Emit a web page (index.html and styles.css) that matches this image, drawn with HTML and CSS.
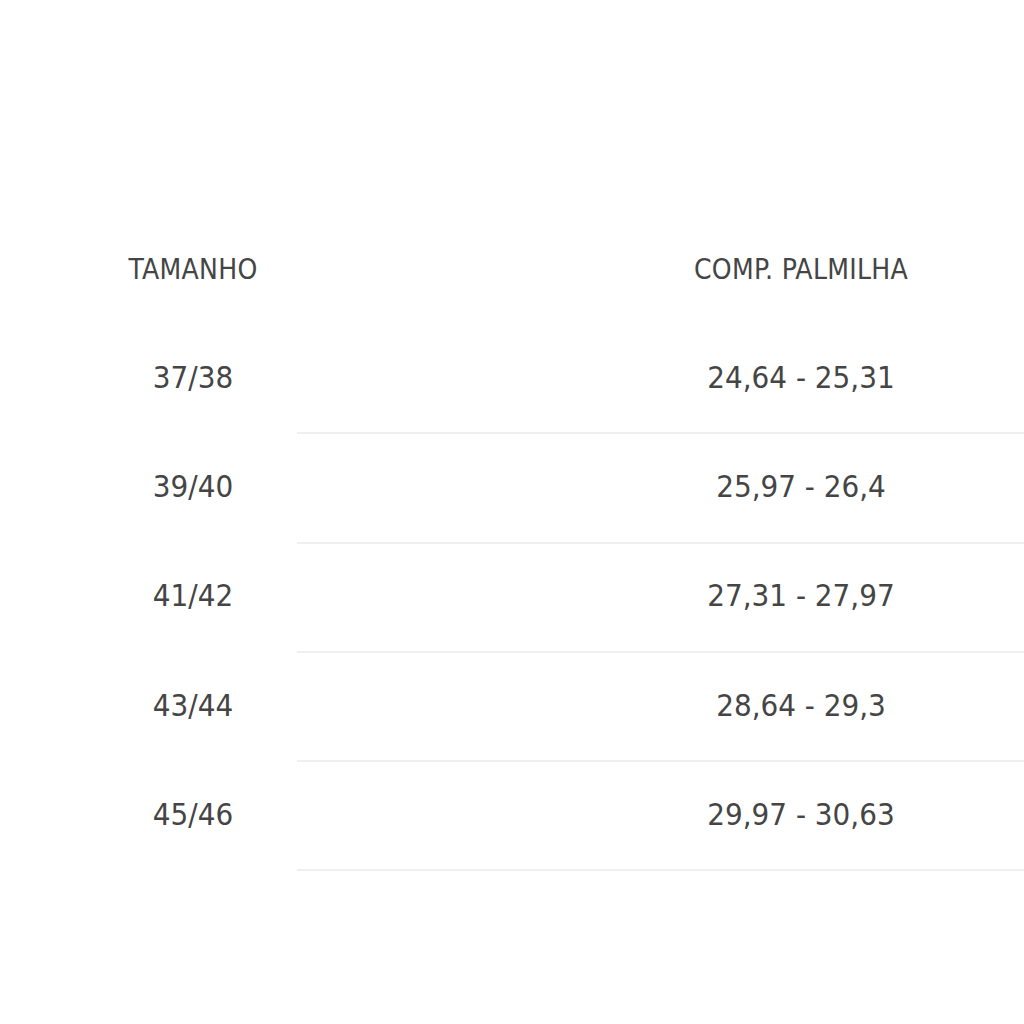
FILE: index.html
```html
<!DOCTYPE html>
<html>
<head>
<meta charset="utf-8">
<link rel="stylesheet" href="styles.css">
</head>
<body>
<div class="page">
  <table class="sizes">
    <thead>
      <tr><th class="c1">TAMANHO</th><th class="c2">COMP. PALMILHA</th></tr>
    </thead>
    <tbody>
      <tr><td class="c1">37/38</td><td class="c2">24,64 - 25,31</td></tr>
      <tr><td class="c1">39/40</td><td class="c2">25,97 - 26,4</td></tr>
      <tr><td class="c1">41/42</td><td class="c2">27,31 - 27,97</td></tr>
      <tr><td class="c1">43/44</td><td class="c2">28,64 - 29,3</td></tr>
      <tr><td class="c1">45/46</td><td class="c2">29,97 - 30,63</td></tr>
    </tbody>
  </table>
</div>
</body>
</html>
```
FILE: styles.css
```css
html, body {
  margin: 0;
  padding: 0;
  background: #fff;
}
.page {
  width: 1024px;
  height: 1024px;
  overflow: hidden;
  padding-top: 216px;
  padding-left: 89px;
  box-sizing: border-box;
}
.sizes {
  width: 1216px;
  min-width: 1216px;
  border-collapse: collapse;
  font-family: "DejaVu Sans Condensed", "DejaVu Sans", sans-serif;
  color: #454545;
  table-layout: fixed;
}
.sizes th {
  font-weight: normal;
  font-size: 28px;
  letter-spacing: 0.3px;
  height: 107px;
  padding: 0 0 2px 0;
  text-align: center;
}
.sizes td {
  font-size: 31px;
  letter-spacing: 0;
  height: 103.3px;
  padding: 0 0 4px 0;
  text-align: center;
}
.c1 { width: 208px; }
.c2 { width: 1008px; }
.sizes tbody td.c2 {
  border-bottom: 2px solid #efefef;
}
```
